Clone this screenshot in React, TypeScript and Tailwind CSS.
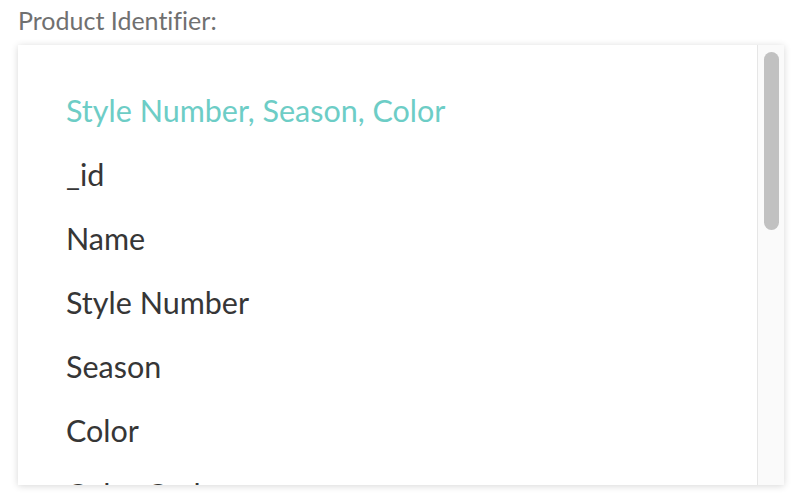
import React from "react";

const items = ["_id", "Name", "Style Number", "Season", "Color", "Color Code"];

export default function App() {
  return (
    <div className="w-[798px] h-[500px] bg-white overflow-hidden font-['Lato','Noto_Sans',sans-serif] [font-variant-ligatures:none]">
      <div className="pl-[18px] pt-[5px] h-[45px] text-[25px] leading-[30px] text-[#707070]">Product Identifier:</div>
      <div className="ml-[18px] w-[766px] h-[440px] flex bg-white shadow-[0_1px_7px_rgba(0,0,0,0.16)] overflow-hidden">
        <div className="flex-1 pt-[34px] pl-[48px]">
          <div className="h-[64px] flex items-center text-[30.5px] text-[#6dcdc6]">Style Number, Season, Color</div>
          {items.map((t) => (
            <div key={t} className="h-[64px] flex items-center text-[30.5px] text-[#363636]">{t}</div>
          ))}
        </div>
        <div className="w-[27px] border-l border-[#e6e6e6] bg-[#fafafa] pt-[7px] pl-[6px]">
          <div className="w-[15px] h-[178px] rounded-full bg-[#c1c1c1]" />
        </div>
      </div>
    </div>
  );
}
